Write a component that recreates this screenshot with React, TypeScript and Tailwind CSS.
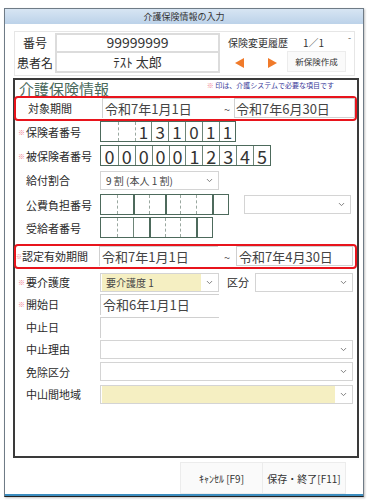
import { ChevronDown } from 'lucide-react';

type Div = 'none' | 'dash' | 'line' | 'bold';

const Cells = ({ chars, divs, w, size }: { chars: string[]; divs: Div[]; w: number; size: string }) => (
    <div className="flex border-[1.5px] border-[#4d6a5c] bg-white">
        {chars.map((c, i) => (
            <div
                key={i}
                className={`flex h-[19px] items-center justify-center leading-none text-[#333] ${size} ${
                    i === 0
                        ? ''
                        : divs[i - 1] === 'dash'
                        ? 'border-l border-dashed border-l-[#9aa8a0]'
                        : divs[i - 1] === 'bold'
                        ? 'border-l-2 border-l-[#4d6a5c]'
                        : 'border-l border-l-[#6d8578]'
                }`}
                style={{ width: w }}
            >
                {c}
            </div>
        ))}
    </div>
);

const Label = ({ req, text }: { req?: boolean; text: string }) => (
    <div className="flex w-[84px] shrink-0 items-center text-[11px] text-[#2a2a2a]">
        <span className="w-[10px] pl-[2px] text-[7px] text-[#f07c8c]">{req ? '※' : ''}</span>
        {text}
    </div>
);

const Select = ({ w, text, yellow }: { w: string; text?: string; yellow?: boolean }) => (
    <div className={`flex h-[19px] items-center justify-between border border-[#d4d4d4] bg-white pl-[1px] pr-[4px] ${w}`}>
        <div className={`flex h-full flex-1 items-center pl-[4px] text-[10px] text-[#444] ${yellow ? 'bg-[#f5efc2]' : ''}`}>{text}</div>
        <ChevronDown size={9} strokeWidth={2.5} className="ml-[4px] text-[#777]" />
    </div>
);

export default function App() {
    return (
        <div className="h-[504px] w-[371px] bg-white pl-[4px] pt-[8px] font-['Noto_Sans_CJK_JP','Liberation_Sans',sans-serif]">
            <div className="flex h-[489px] w-[360px] flex-col border border-[#6f7b86] border-b-[#222] bg-white shadow-[1px_1px_2px_rgba(0,0,0,0.25)]">
                {/* title bar */}
                <div className="flex h-[15px] items-center justify-center bg-gradient-to-b from-[#d7e5f3] to-[#bcd2e9] text-[9px] text-[#333]">
                    介護保険情報の入力
                </div>

                {/* header */}
                <div className="ml-[9px] mt-[7px] flex h-[45px] w-[341px] flex-col border border-[#e6e6e6] pt-[1px]">
                    <div className="flex h-[20px] items-center">
                        <div className="w-[40px] text-center text-[12px] text-[#2a2a2a]">番号</div>
                        <div className="flex h-[20px] w-[165px] items-center justify-center border-2 border-[#dcdcdc] text-[14px] text-[#333]">
                            99999999
                        </div>
                        <div className="ml-[8px] text-[10px] text-[#333]">保険変更履歴</div>
                        <div className="ml-[15px] text-[10px] text-[#333]">1／1</div>
                        <div className="ml-auto mr-[3px] self-start text-[9px] leading-[10px] text-[#555]">-</div>
                    </div>
                    <div className="flex h-[20px] items-center">
                        <div className="w-[40px] text-center text-[12px] text-[#2a2a2a]">患者名</div>
                        <div className="flex h-[20px] w-[165px] items-center justify-center border-2 border-t-0 border-[#dcdcdc] text-[13px] text-[#333]">
                            ﾃｽﾄ 太郎
                        </div>
                        <div className="ml-[15px] h-0 w-0 border-y-[5px] border-r-[9px] border-y-transparent border-r-[#f07a2a]" />
                        <div className="ml-[24px] h-0 w-0 border-y-[5px] border-l-[9px] border-y-transparent border-l-[#f07a2a]" />
                        <div className="-mt-[3px] ml-[10px] flex h-[21px] w-[59px] items-center justify-center border border-[#ececec] bg-[#fafafa] text-[8.5px] text-[#333]">
                            新保険作成
                        </div>
                    </div>
                </div>

                {/* main panel */}
                <div className="ml-[8px] mt-[2px] flex h-[381px] w-[346px] flex-col border-2 border-[#3a3a3a] px-[1px]">
                    <div className="flex h-[16px] items-end justify-between">
                        <div className="-mb-[1px] pl-[3px] text-[15px] leading-[16px] text-[#4a6a5c]">介護保険情報</div>
                        <div className="mb-[7px] mr-[22px] text-[7px] leading-none text-[#3a3a9a]">
                            <span className="text-[#f07c8c]">※</span> 印は、介護システムで必要な項目です
                        </div>
                    </div>

                    {/* 対象期間 */}
                    <div className="-ml-[2px] flex h-[25px] w-[343px] items-center rounded-[4px] border-2 border-[#e8141c]">
                        <div className="w-[86px] pl-[12px] text-[11px] text-[#2a2a2a]">対象期間</div>
                        <div className="flex h-[20px] w-[118px] items-center border-l border-t border-[#d0d0d0] pl-[2px] text-[13px] text-[#444]">
                            令和7年1月1日
                        </div>
                        <div className="mt-[2px] w-[14px] text-center text-[11px] text-[#555]">~</div>
                        <div className="flex h-[20px] w-[121px] items-center border border-[#d0d0d0] pl-[1px] text-[13px] text-[#444]">
                            令和7年6月30日
                        </div>
                    </div>

                    <div className="mt-[0px] flex h-[22px] items-center">
                        <Label req text="保険者番号" />
                        <Cells
                            chars={['', '', '1', '3', '1', '0', '1', '1']}
                            divs={['dash', 'dash', 'line', 'line', 'line', 'line', 'line']}
                            w={16.8}
                            size="text-[17px]"
                        />
                    </div>
                    <div className="mt-[2px] flex h-[22px] items-center">
                        <Label req text="被保険者番号" />
                        <Cells
                            chars={['0', '0', '0', '0', '0', '1', '2', '3', '4', '5']}
                            divs={['line', 'line', 'line', 'line', 'line', 'line', 'line', 'line', 'line']}
                            w={16.9}
                            size="text-[18px]"
                        />
                    </div>
                    <div className="mt-[2px] flex h-[23px] items-center">
                        <Label text="給付割合" />
                        <Select w="w-[119px]" text="9 割 (本人 1 割)" />
                    </div>
                    <div className="mt-[2px] flex h-[22px] items-center">
                        <Label text="公費負担番号" />
                        <Cells
                            chars={['', '', '', '', '', '', '', '']}
                            divs={['dash', 'bold', 'dash', 'bold', 'dash', 'dash', 'bold']}
                            w={15.9}
                            size="text-[17px]"
                        />
                        <div className="ml-[15px]">
                            <Select w="w-[107px]" />
                        </div>
                    </div>
                    <div className="mt-[1px] flex h-[22px] items-center">
                        <Label text="受給者番号" />
                        <Cells
                            chars={['', '', '', '', '', '', '']}
                            divs={['dash', 'line', 'bold', 'dash', 'dash', 'bold']}
                            w={15.9}
                            size="text-[17px]"
                        />
                    </div>

                    {/* 認定有効期間 */}
                    <div className="-ml-[2px] mt-[5px] flex h-[25px] w-[343px] items-center rounded-[4px] border-2 border-[#e8141c]">
                        <div className="flex w-[83px] items-center text-[11px] text-[#2a2a2a]">
                            <span className="w-[6px] text-[6px] text-[#f07c8c]">※</span>認定有効期間
                        </div>
                        <div className="flex h-[20px] w-[119px] items-center border-l border-t border-[#d0d0d0] pl-[2px] text-[13px] text-[#444]">
                            令和7年1月1日
                        </div>
                        <div className="mt-[2px] w-[18px] text-center text-[11px] text-[#555]">~</div>
                        <div className="flex h-[20px] w-[117px] items-center border border-[#d0d0d0] pl-[2px] text-[13px] text-[#444]">
                            令和7年4月30日
                        </div>
                    </div>

                    <div className="mt-[3px] flex h-[21px] items-center">
                        <Label req text="要介護度" />
                        <Select w="w-[119px]" text="要介護度 1" yellow />
                        <div className="ml-[8px] w-[28px] text-[11px] text-[#2a2a2a]">区分</div>
                        <Select w="w-[98px]" />
                    </div>
                    <div className="mt-[1px] flex h-[21px] items-center">
                        <Label req text="開始日" />
                        <div className="flex h-[21px] w-[119px] items-center self-start border-l border-t border-[#d0d0d0] pl-[2px] text-[13px] text-[#444]">
                            令和6年1月1日
                        </div>
                    </div>
                    <div className="mt-[2px] flex h-[21px] items-center">
                        <Label text="中止日" />
                        <div className="h-[21px] w-[119px] self-start border-l border-t border-[#d0d0d0]" />
                    </div>
                    <div className="mt-[1px] flex h-[21px] items-center">
                        <Label text="中止理由" />
                        <Select w="w-[253px]" />
                    </div>
                    <div className="mt-[1px] flex h-[22px] items-center">
                        <Label text="免除区分" />
                        <Select w="w-[253px]" />
                    </div>
                    <div className="mt-[1px] flex h-[21px] items-center">
                        <Label text="中山間地域" />
                        <Select w="w-[253px]" yellow />
                    </div>
                </div>

                {/* buttons */}
                <div className="mt-[4px] flex justify-end pr-[17px]">
                    <div className="flex h-[32px] w-[83px] items-center justify-center border border-[#ececec] bg-[#fafafa] text-[10px] text-[#333]">
                        ｷｬﾝｾﾙ [F9]
                    </div>
                    <div className="flex h-[32px] w-[83px] items-center justify-center border border-l-0 border-[#ececec] bg-[#fafafa] text-[10px] text-[#333]">
                        保存・終了[F11]
                    </div>
                </div>
                <div className="mt-auto h-[2px] bg-[#3c8dbf]" />
            </div>
        </div>
    );
}
